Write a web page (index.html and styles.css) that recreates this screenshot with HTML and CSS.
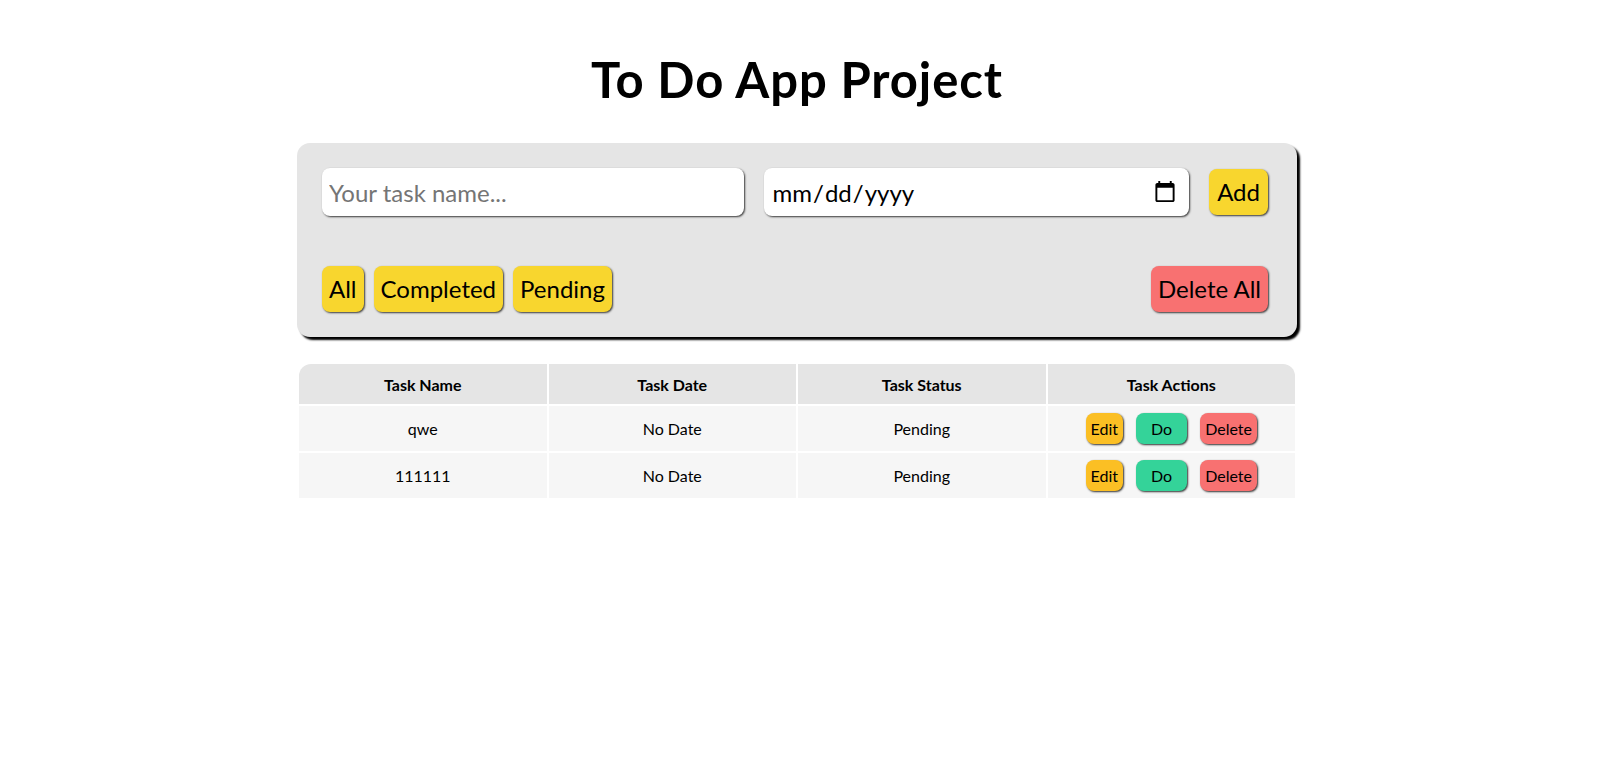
FILE: index.html
```html
<!DOCTYPE html>
<html lang="en">
<head>
<meta charset="utf-8">
<title>To Do App Project</title>
<link rel="stylesheet" href="styles.css">
</head>
<body>
<main class="app">
  <h1 class="title">To Do App Project</h1>
  <section class="panel">
    <div class="add-row">
      <input class="field" type="text" placeholder="Your task name...">
      <input class="field field-date" type="date">
      <button class="btn btn-yellow btn-add">Add</button>
    </div>
    <div class="filter-row">
      <div class="filters">
        <button class="btn btn-yellow">All</button>
        <button class="btn btn-yellow">Completed</button>
        <button class="btn btn-yellow">Pending</button>
      </div>
      <button class="btn btn-red">Delete All</button>
    </div>
  </section>
  <table class="tasks">
    <thead>
      <tr>
        <th>Task Name</th>
        <th>Task Date</th>
        <th>Task Status</th>
        <th>Task Actions</th>
      </tr>
    </thead>
    <tbody>
      <tr>
        <td>qwe</td>
        <td>No Date</td>
        <td>Pending</td>
        <td>
          <div class="actions">
            <button class="mini mini-edit">Edit</button>
            <button class="mini mini-do">Do</button>
            <button class="mini mini-delete">Delete</button>
          </div>
        </td>
      </tr>
      <tr>
        <td>111111</td>
        <td>No Date</td>
        <td>Pending</td>
        <td>
          <div class="actions">
            <button class="mini mini-edit">Edit</button>
            <button class="mini mini-do">Do</button>
            <button class="mini mini-delete">Delete</button>
          </div>
        </td>
      </tr>
    </tbody>
  </table>
</main>
</body>
</html>
```
FILE: styles.css
```css
* {
  box-sizing: border-box;
}

html, body {
  margin: 0;
  padding: 0;
  background: #ffffff;
}

body {
  font-family: "Lato", "Open Sans", sans-serif;
  color: #000;
  display: flex;
  justify-content: center;
  padding-right: 3px;
}

.app {
  width: 1000px;
  padding-top: 50px;
}

.title {
  margin: 0 0 35px;
  font-size: 49px;
  line-height: 58px;
  font-weight: 700;
  letter-spacing: 0.9px;
  text-align: center;
}

.panel {
  background: #e5e5e5;
  border-radius: 13px;
  padding: 25px 29px 25px 25px;
  box-shadow: 3px 3px 2px #000;
}

.add-row {
  display: flex;
  gap: 20px;
  align-items: center;
}

.field {
  flex: 1 1 0;
  min-width: 0;
  height: 48px;
  border: none;
  border-radius: 8px;
  background: #fff;
  padding: 0 7px;
  font-family: inherit;
  font-size: 24px;
  color: #000;
  box-shadow: 1px 1px 2px rgba(0, 0, 0, 0.75);
  outline: none;
}

.field::placeholder {
  color: #757575;
}

.field-date {
  padding: 0 10px 0 8px;
}

.filter-row {
  margin-top: 50px;
  display: flex;
  justify-content: space-between;
  align-items: center;
}

.filters {
  display: flex;
  gap: 10px;
}

.btn {
  border: none;
  border-radius: 8px;
  padding: 7px;
  font-family: inherit;
  font-size: 24px;
  line-height: 32px;
  color: #000;
  box-shadow: 1px 1px 2px rgba(0, 0, 0, 0.75);
  cursor: pointer;
}

.btn-add {
  padding: 7px 8px;
}

.btn-yellow {
  background: #f8d62e;
}

.btn-red {
  background: #f87171;
}

.tasks {
  margin-top: 25px;
  width: 1000px;
  border-spacing: 2px;
  table-layout: fixed;
}

.tasks th {
  background: #e5e5e5;
  height: 40px;
  padding: 0;
  font-size: 16px;
  font-weight: 700;
  text-align: center;
  vertical-align: middle;
}

.tasks th:first-child {
  border-top-left-radius: 12px;
}

.tasks th:last-child {
  border-top-right-radius: 12px;
}

.tasks td {
  background: #f6f6f6;
  height: 45px;
  padding: 0;
  font-size: 16px;
  text-align: center;
  vertical-align: middle;
}

.actions {
  display: flex;
  justify-content: center;
  gap: 13px;
}

.mini {
  border: none;
  border-radius: 8px;
  padding: 5px;
  font-family: inherit;
  font-size: 16px;
  line-height: 21px;
  color: #000;
  box-shadow: 1px 1px 2px rgba(0, 0, 0, 0.8);
  cursor: pointer;
}

.mini-edit {
  background: #fbbf24;
}

.mini-do {
  background: #34d399;
  padding: 5px 15px;
}

.mini-delete {
  background: #f87171;
}
```
